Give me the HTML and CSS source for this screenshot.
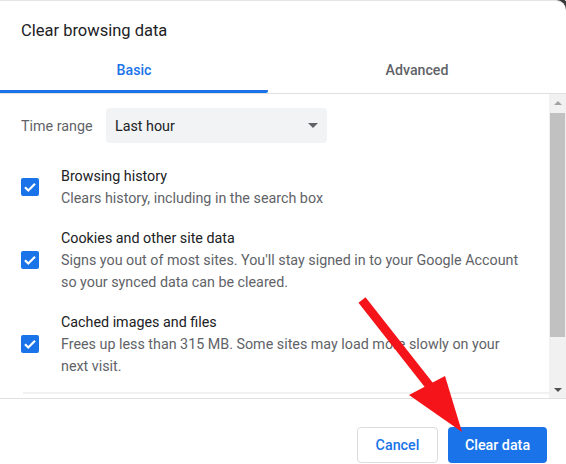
FILE: index.html
```html
<!DOCTYPE html>
<html>
<head>
<meta charset="utf-8">
<link rel="stylesheet" href="styles.css">
</head>
<body>
<div class="dialog">
  <div class="title">Clear browsing data</div>
  <div class="tabs">
    <div class="tab tab-active">Basic</div>
    <div class="tab">Advanced</div>
  </div>
  <div class="content">
    <div class="scroll-body">
      <div class="range-row">
        <span class="range-label">Time range</span>
        <div class="select">
          <span>Last hour</span>
          <span class="caret"></span>
        </div>
      </div>
      <div class="item">
        <span class="check"><svg viewBox="0 0 18 18" width="18" height="18"><path d="M4 9.2l3.3 3.3L14 5.8" fill="none" stroke="#fff" stroke-width="2.2"/></svg></span>
        <div class="item-text">
          <div class="item-title">Browsing history</div>
          <div class="item-desc">Clears history, including in the search box</div>
        </div>
      </div>
      <div class="item">
        <span class="check"><svg viewBox="0 0 18 18" width="18" height="18"><path d="M4 9.2l3.3 3.3L14 5.8" fill="none" stroke="#fff" stroke-width="2.2"/></svg></span>
        <div class="item-text">
          <div class="item-title">Cookies and other site data</div>
          <div class="item-desc">Signs you out of most sites. You'll stay signed in to your Google Account so your synced data can be cleared.</div>
        </div>
      </div>
      <div class="item">
        <span class="check"><svg viewBox="0 0 18 18" width="18" height="18"><path d="M4 9.2l3.3 3.3L14 5.8" fill="none" stroke="#fff" stroke-width="2.2"/></svg></span>
        <div class="item-text">
          <div class="item-title">Cached images and files</div>
          <div class="item-desc">Frees up less than 315 MB. Some sites may load more slowly on your next visit.</div>
        </div>
      </div>
      <div class="next-sep"></div>
    </div>
    <div class="scrollbar">
      <span class="sb-up"></span>
      <span class="sb-thumb"></span>
      <span class="sb-down"></span>
    </div>
  </div>
  <div class="footer">
    <button class="btn btn-cancel">Cancel</button>
    <button class="btn btn-primary">Clear data</button>
  </div>
  <svg class="arrow" width="566" height="464" viewBox="0 0 566 464">
    <line x1="362" y1="299" x2="432" y2="388" stroke="#f5141a" stroke-width="9" stroke-linecap="butt"/>
    <polygon points="409,394 445,375 462,431" fill="#f5141a"/>
  </svg>
</div>
</body>
</html>
```

FILE: styles.css
```css
* { box-sizing: border-box; }
html, body {
  margin: 0;
  padding: 0;
  width: 566px;
  height: 464px;
  overflow: hidden;
  background: #fff;
}
body {
  font-family: Roboto, "Noto Sans", Arial, sans-serif;
  color: #202124;
}
.dialog {
  position: relative;
  width: 566px;
  height: 464px;
  display: flex;
  flex-direction: column;
  background: #fff;
  border-top: 1px solid #e6e6e6;
  border-top-right-radius: 10px;
  box-shadow: 3px -3px 0 -1px #3a3a3a;
}
.title {
  height: 47px;
  padding: 20px 0 0 21px;
  font-size: 16.5px;
  line-height: 20px;
  color: #202124;
}
.tabs {
  display: flex;
  height: 46px;
  border-bottom: 1px solid #e0e0e0;
}
.tab {
  flex: 1;
  text-align: center;
  font-size: 14.2px;
  font-weight: 500;
  color: #5f6368;
  padding-top: 13px;
  line-height: 18px;
}
.tab-active {
  flex: 0 0 268px;
  color: #1a73e8;
  border-bottom: 3px solid #1a73e8;
  border-bottom-right-radius: 2px;
}
.content {
  display: flex;
  height: 305px;
  border-bottom: 1px solid #e0e0e0;
}
.scroll-body {
  flex: 1;
  padding: 14px 0 0 21px;
  overflow: hidden;
}
.range-row {
  display: flex;
  align-items: center;
  height: 35px;
}
.range-label {
  width: 85px;
  font-size: 14.3px;
  color: #5f6368;
}
.select {
  width: 221px;
  height: 35px;
  background: #f1f3f4;
  border-radius: 4px;
  display: flex;
  align-items: center;
  justify-content: space-between;
  padding: 0 9px 0 9px;
  font-size: 14.3px;
  color: #202124;
}
.caret {
  width: 0;
  height: 0;
  border-left: 5px solid transparent;
  border-right: 5px solid transparent;
  border-top: 5px solid #5f6368;
}
.item {
  display: flex;
  align-items: center;
  margin-top: 18px;
}
.range-row + .item { margin-top: 22px; }
.check {
  flex: 0 0 18px;
  width: 18px;
  height: 18px;
  border-radius: 2px;
  background: #1a73e8;
  margin-right: 22px;
  display: flex;
}
.item-text {
  font-size: 14.3px;
  line-height: 22px;
  padding-right: 26px;
}
.item-title { color: #202124; }
.item-desc { color: #5f6368; }
.next-sep {
  margin: 15px 0 0 2px;
  height: 2px;
  background: #f1f1f1;
}
.scrollbar {
  flex: 0 0 17px;
  background: #f1f1f1;
  display: flex;
  flex-direction: column;
  align-items: center;
  padding: 7px 0 6px;
}
.sb-up {
  width: 0; height: 0;
  border-left: 4px solid transparent;
  border-right: 4px solid transparent;
  border-bottom: 4px solid #a3a3a3;
}
.sb-thumb {
  width: 15px;
  height: 224px;
  margin-top: 8px;
  background: #c1c1c1;
}
.sb-down {
  margin-top: auto;
  width: 0; height: 0;
  border-left: 4px solid transparent;
  border-right: 4px solid transparent;
  border-top: 4px solid #505050;
}
.footer {
  flex: 1;
  display: flex;
  justify-content: flex-end;
  align-items: flex-start;
  gap: 10px;
  padding: 28px 19px 0 0;
}
.btn {
  height: 36px;
  border-radius: 4px;
  font-family: Roboto, "Noto Sans", Arial, sans-serif;
  font-size: 14.3px;
  font-weight: 500;
  cursor: pointer;
}
.btn-cancel {
  width: 81px;
  background: #fff;
  color: #1a73e8;
  border: 1px solid #dadce0;
}
.btn-primary {
  width: 99px;
  background: #1a73e8;
  color: #fff;
  border: none;
}
.arrow {
  position: absolute;
  left: 0;
  top: 0;
  pointer-events: none;
}
```
